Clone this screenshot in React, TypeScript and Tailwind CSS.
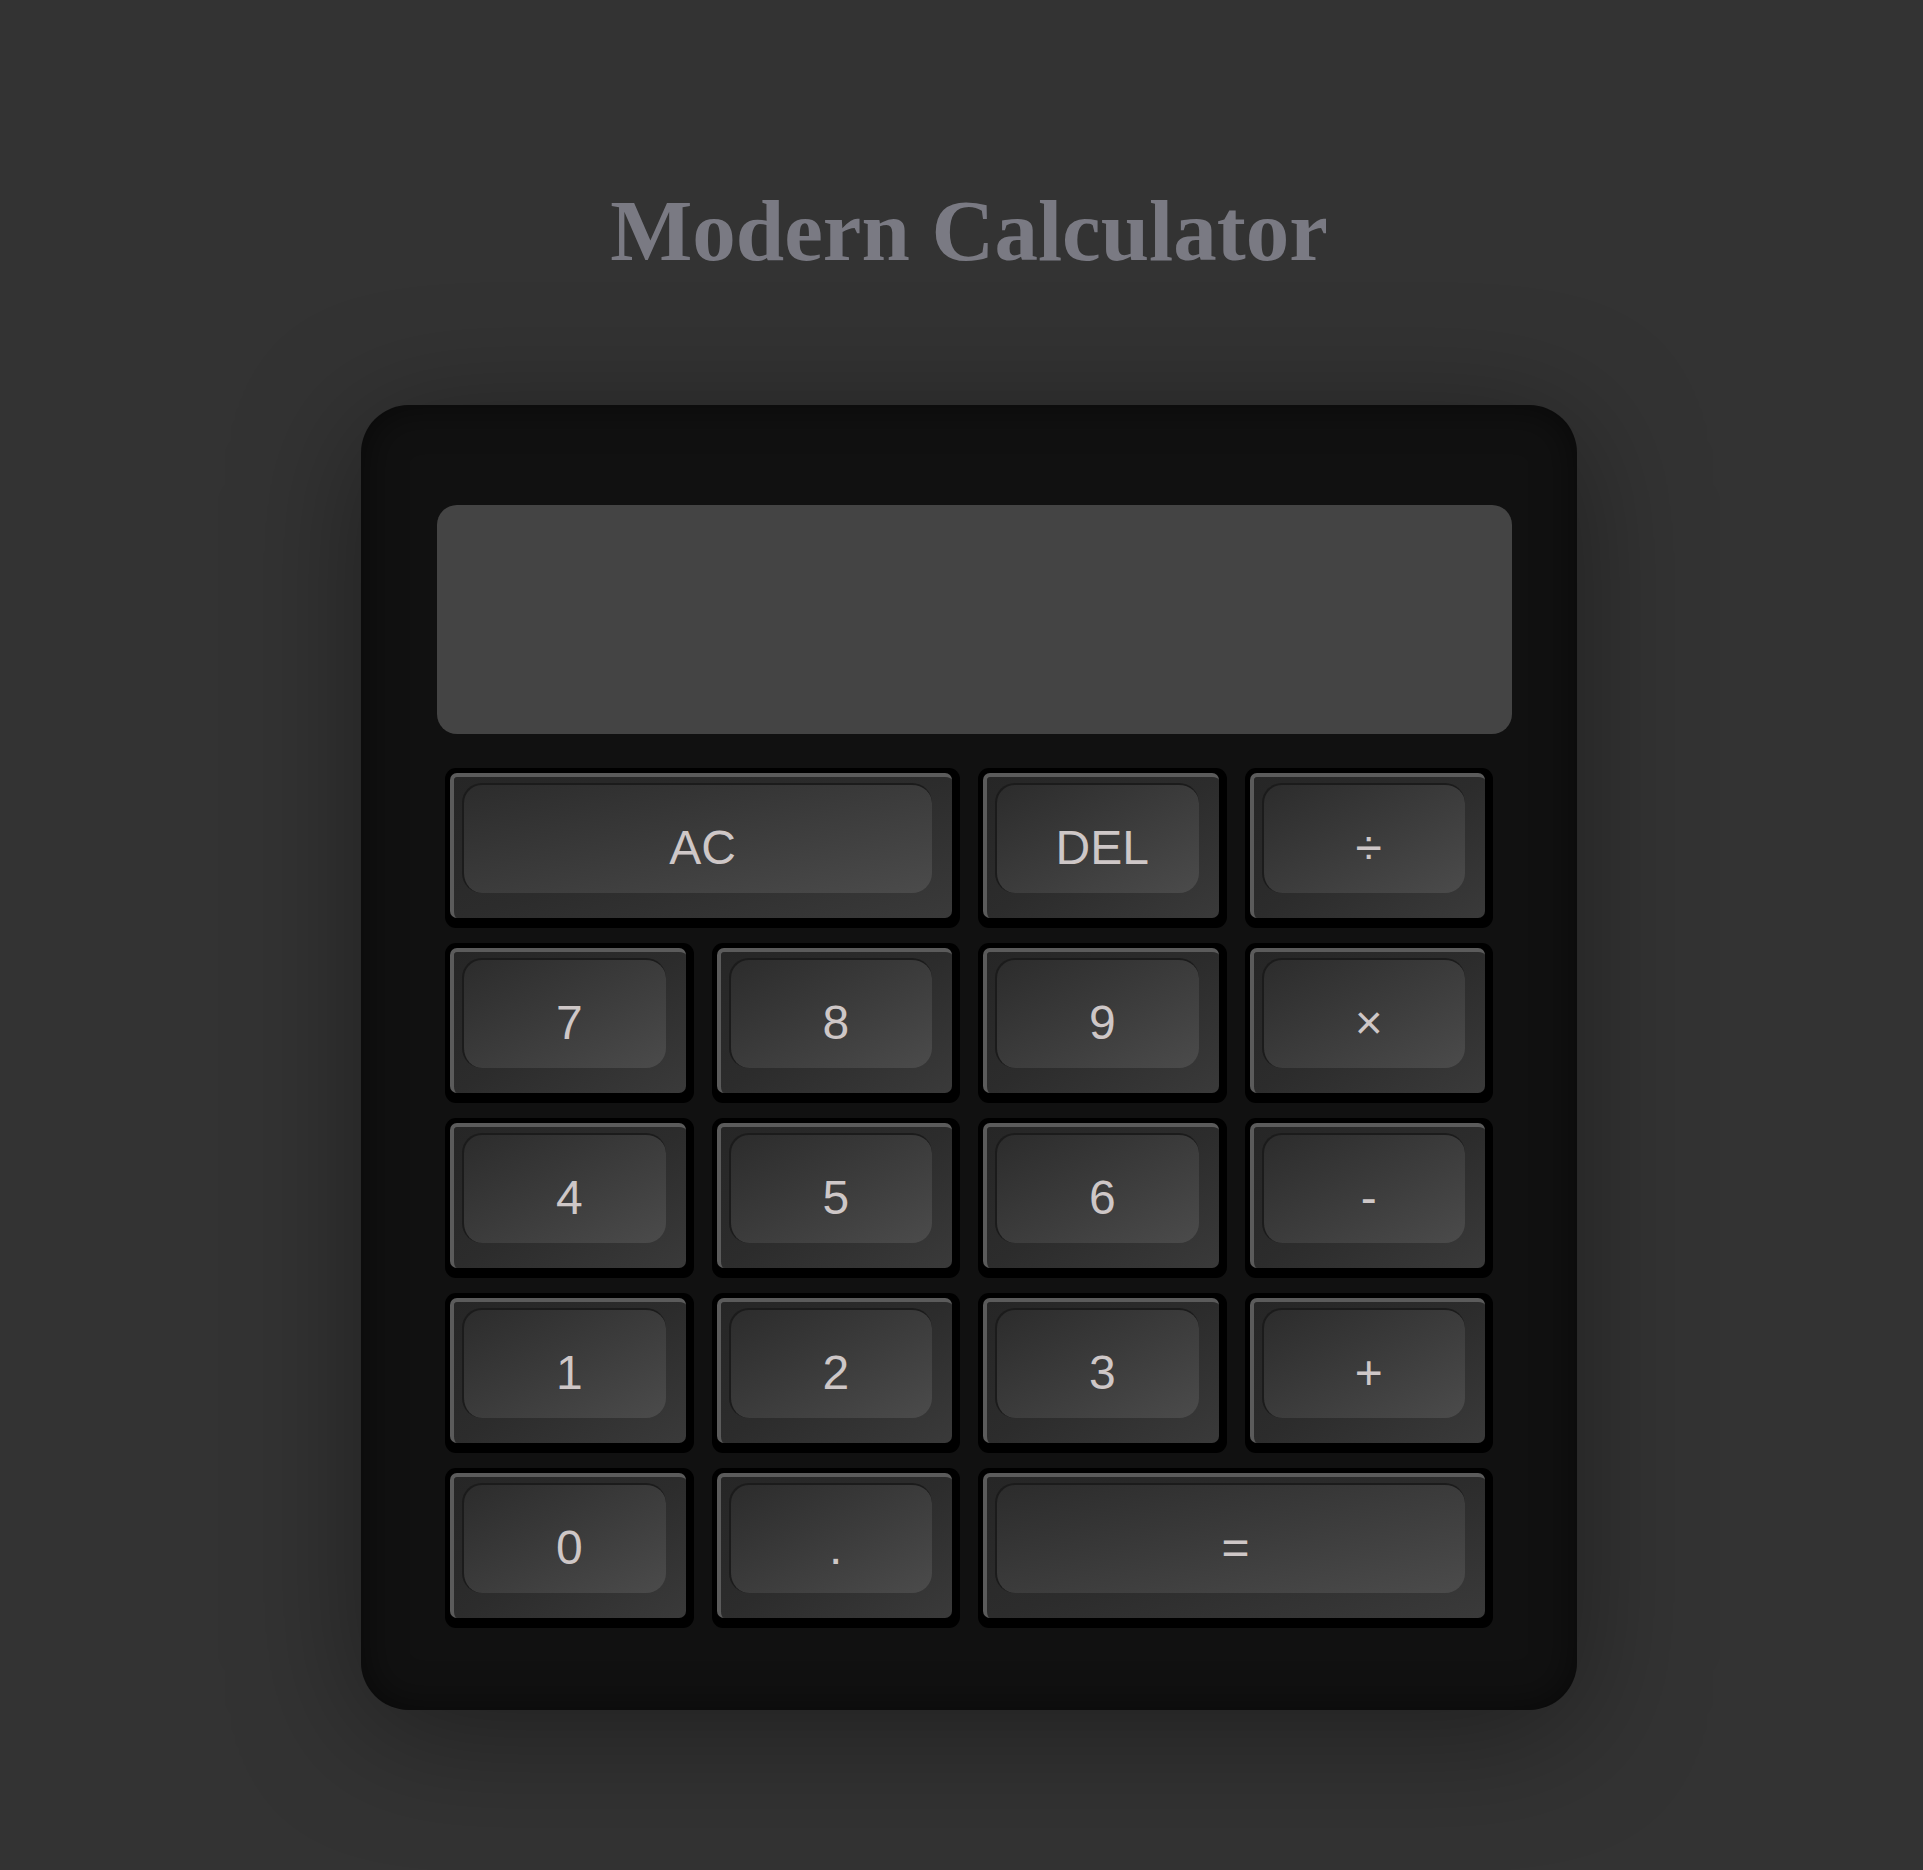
import React from 'react';

type CalcKeyDef = { label: string; wide?: boolean };

const keys: CalcKeyDef[] = [
  { label: 'AC', wide: true },
  { label: 'DEL' },
  { label: '÷' },
  { label: '7' },
  { label: '8' },
  { label: '9' },
  { label: '×' },
  { label: '4' },
  { label: '5' },
  { label: '6' },
  { label: '-' },
  { label: '1' },
  { label: '2' },
  { label: '3' },
  { label: '+' },
  { label: '0' },
  { label: '.' },
  { label: '=', wide: true },
];

const CalcKey: React.FC<CalcKeyDef> = ({ label, wide }) => {
  return (
    <button
      className={`relative h-[160px] rounded-[11px] bg-black pt-[5px] pl-[5px] pr-[8px] pb-[10px] ${
        wide ? 'col-span-2' : ''
      }`}
    >
      <div className="flex h-full flex-col rounded-[7px] border-t-[4px] border-l-[4px] border-[#5b5b5b] bg-linear-to-br from-[#262626] via-[#2c2c2c] to-[#3a3a3a] pt-[6px] pl-[8px] pr-[20px] pb-[25px]">
        <div className="flex-1 rounded-[20px] border-t-2 border-l-2 border-[#1b1b1b] bg-linear-to-br from-[#2c2c2c] to-[#4b4b4b]" />
      </div>
      <span className="absolute inset-0 flex items-center justify-center font-['Liberation_Sans',Arial,sans-serif] text-[48px] text-[#cec7c7]">
        {label}
      </span>
    </button>
  );
};

export default function App() {
  return (
    <div className="flex min-h-[1870px] flex-col items-center bg-[#333333] pl-[15px]">
      <h1 className="mt-[187px] font-['Liberation_Serif','Times_New_Roman',serif] text-[87px] font-bold leading-none text-[#7a7a83]">
        Modern Calculator
      </h1>

      <div className="mt-[131px] w-[1216px] rounded-[48px] bg-[#111111] pt-[100px] pl-[76px] pb-[82px] shadow-[inset_0_0_40px_rgba(0,0,0,0.55),0_20px_130px_rgba(0,0,0,0.4)]">
        <div className="h-[229px] w-[1075px] rounded-[20px] bg-[#444444]" />

        <div className="mt-[34px] ml-[8px] grid w-[1048px] grid-cols-4 gap-x-[18px] gap-y-[15px]">
          {keys.map((k) => (
            <CalcKey key={k.label} label={k.label} wide={k.wide} />
          ))}
        </div>
      </div>
    </div>
  );
}
